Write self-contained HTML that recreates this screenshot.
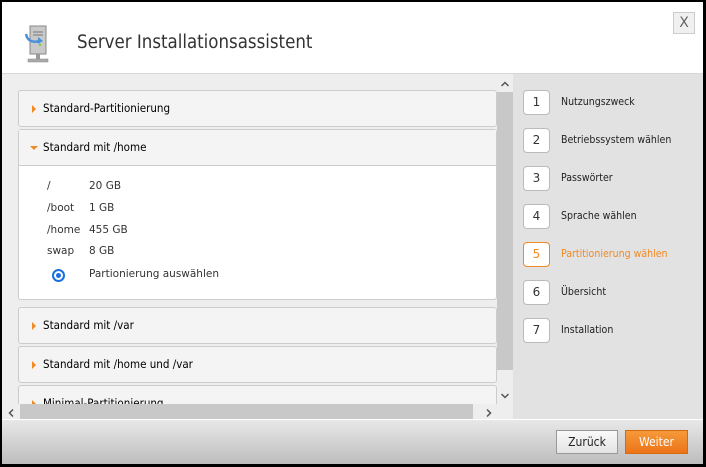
<!DOCTYPE html>
<html><head><meta charset="utf-8"><style>
*{box-sizing:border-box;margin:0;padding:0}
body{width:706px;height:467px;background:#000;font-family:"DejaVu Sans","Liberation Sans",sans-serif;overflow:hidden;position:relative}
.win{position:absolute;left:2px;top:2px;width:701px;height:462px;background:#fff}
.abs{position:absolute}
.title{left:75px;top:30px;font-size:18.5px;color:#333;font-family:"DejaVu Sans Condensed","DejaVu Sans",sans-serif}
.x{left:671px;top:10px;width:22px;height:22px;border:1px solid #ccc;background:#f0f0f0;color:#666;font-size:14px;text-align:center;line-height:20px}
.content{left:0;top:71px;width:511px;height:346px;background:#eee;border-top:1px solid #d6d6d6}
.side{left:511px;top:71px;width:190px;height:346px;background:#e2e2e2;border-top:1px solid #d6d6d6}
.panel{position:absolute;left:16px;width:479px;background:#f4f4f4;border:1px solid #ccc;border-radius:3px;font-size:11.5px;color:#000}
.ph{height:36px;line-height:35px;padding-left:24px;position:relative;font-family:"DejaVu Sans Condensed","DejaVu Sans",sans-serif;color:#000}
.tri{position:absolute;left:13px;top:14px;width:0;height:0;border-top:4px solid transparent;border-bottom:4px solid transparent;border-left:4px solid #f08a24}
.trid{position:absolute;left:11px;top:16px;width:0;height:0;border-left:4px solid transparent;border-right:4px solid transparent;border-top:4px solid #f08a24}
.row{position:absolute;font-size:10.5px;color:#333}
.step{position:absolute;left:10px;width:27px;height:25px;background:#fff;border:1px solid #bbb;border-radius:4px;text-align:center;line-height:23px;font-size:12px;color:#333}
.sl{position:absolute;left:48px;font-size:10.5px;color:#222;font-family:"DejaVu Sans Condensed","DejaVu Sans",sans-serif}
.footer{left:0;top:417px;width:701px;height:45px;background:linear-gradient(#e8e8e8,#bdbdbd);border-top:1px solid #fff}
.btn{position:absolute;top:10px;height:24px;line-height:22px;text-align:center;font-size:12px;font-family:"DejaVu Sans Condensed","DejaVu Sans",sans-serif}
</style></head><body>
<div class="win">
<svg class="abs" style="left:22px;top:22px" width="34" height="40" viewBox="0 0 34 40">
<rect x="6" y="2" width="16" height="28" fill="#c9c9c9" stroke="#888"/>
<line x1="9" y1="8" x2="19" y2="8" stroke="#777"/><line x1="9" y1="11" x2="19" y2="11" stroke="#777"/>
<rect x="15" y="20" width="2" height="2" fill="#7c3"/>
<path d="M2 10 Q4 20 16 17" stroke="#4a90d9" stroke-width="2.5" fill="none"/>
<path d="M14 13 L19 17 L14 20Z" fill="#4a90d9"/>
<rect x="12" y="30" width="4" height="5" fill="#999"/>
<rect x="4" y="35" width="20" height="3" fill="#aaa" stroke="#888" stroke-width=".5"/>
</svg>
<div class="abs title">Server Installationsassistent</div>
<div class="abs x">X</div>
<div class="abs content">
 <div class="panel" style="top:16px;height:37px"><div class="ph"><span class="tri"></span>Standard-Partitionierung</div></div>
 <div class="panel" style="top:55px;height:171px;background:#fff"><div class="ph" style="background:#f4f4f4;border-bottom:1px solid #ccc"><span class="trid"></span>Standard mit /home</div>
  <div class="row" style="left:28px;top:50px">/</div><div class="row" style="left:70px;top:50px">20 GB</div>
  <div class="row" style="left:28px;top:72px">/boot</div><div class="row" style="left:70px;top:72px">1 GB</div>
  <div class="row" style="left:28px;top:94px">/home</div><div class="row" style="left:70px;top:94px">455 GB</div>
  <div class="row" style="left:28px;top:115px">swap</div><div class="row" style="left:70px;top:115px">8 GB</div>
  <div class="abs" style="left:33px;top:139px;width:13px;height:13px;border-radius:50%;border:2px solid #1a6fe0;background:#fff"><div style="margin:2px;width:5px;height:5px;border-radius:50%;background:#1a6fe0"></div></div>
  <div class="row" style="left:70px;top:138px">Partionierung auswählen</div>
 </div>
 <div class="panel" style="top:233px;height:37px"><div class="ph"><span class="tri"></span>Standard mit /var</div></div>
 <div class="panel" style="top:272px;height:37px"><div class="ph"><span class="tri"></span>Standard mit /home und /var</div></div>
 <div class="panel" style="top:311px;height:40px"><div class="ph"><span class="tri"></span>Minimal-Partitionierung</div></div>
 <div class="abs" style="left:495px;top:0;width:16px;height:330px;background:#eee"></div>
 <div class="abs" style="left:495px;top:18px;width:16px;height:278px;background:#c8c8c8"></div>
 <svg class="abs" style="left:498px;top:6px" width="10" height="8"><path d="M1.5 6 L5 2.5 L8.5 6" stroke="#555" stroke-width="1.5" fill="none"/></svg>
 <svg class="abs" style="left:498px;top:318px" width="10" height="8"><path d="M1.5 2 L5 5.5 L8.5 2" stroke="#555" stroke-width="1.5" fill="none"/></svg>
 <div class="abs" style="left:0;top:330px;width:495px;height:16px;background:#eee"></div>
 <div class="abs" style="left:18px;top:330px;width:453px;height:16px;background:#c8c8c8"></div>
 <svg class="abs" style="left:5px;top:334px" width="8" height="10"><path d="M6 1.5 L2.5 5 L6 8.5" stroke="#555" stroke-width="1.5" fill="none"/></svg>
 <svg class="abs" style="left:483px;top:334px" width="8" height="10"><path d="M2 1.5 L5.5 5 L2 8.5" stroke="#555" stroke-width="1.5" fill="none"/></svg>
</div>
<div class="abs side">
 <div class="step" style="top:16px">1</div><div class="sl" style="top:22px">Nutzungszweck</div>
 <div class="step" style="top:54px">2</div><div class="sl" style="top:60px">Betriebssystem wählen</div>
 <div class="step" style="top:92px">3</div><div class="sl" style="top:98px">Passwörter</div>
 <div class="step" style="top:130px">4</div><div class="sl" style="top:136px">Sprache wählen</div>
 <div class="step" style="top:168px;border-color:#f08a24;color:#f08a24">5</div><div class="sl" style="top:174px;color:#f08a24">Partitionierung wählen</div>
 <div class="step" style="top:206px">6</div><div class="sl" style="top:212px">Übersicht</div>
 <div class="step" style="top:244px">7</div><div class="sl" style="top:250px">Installation</div>
</div>
<div class="abs footer">
 <div class="btn" style="left:554px;width:62px;background:linear-gradient(#fafafa,#e4e4e4);border:1px solid #999;color:#222">Zurück</div>
 <div class="btn" style="left:623px;width:63px;background:linear-gradient(#f59a3a,#ec7418);border:1px solid #d66a10;color:#fff">Weiter</div>
</div>
</div>
</body></html>
